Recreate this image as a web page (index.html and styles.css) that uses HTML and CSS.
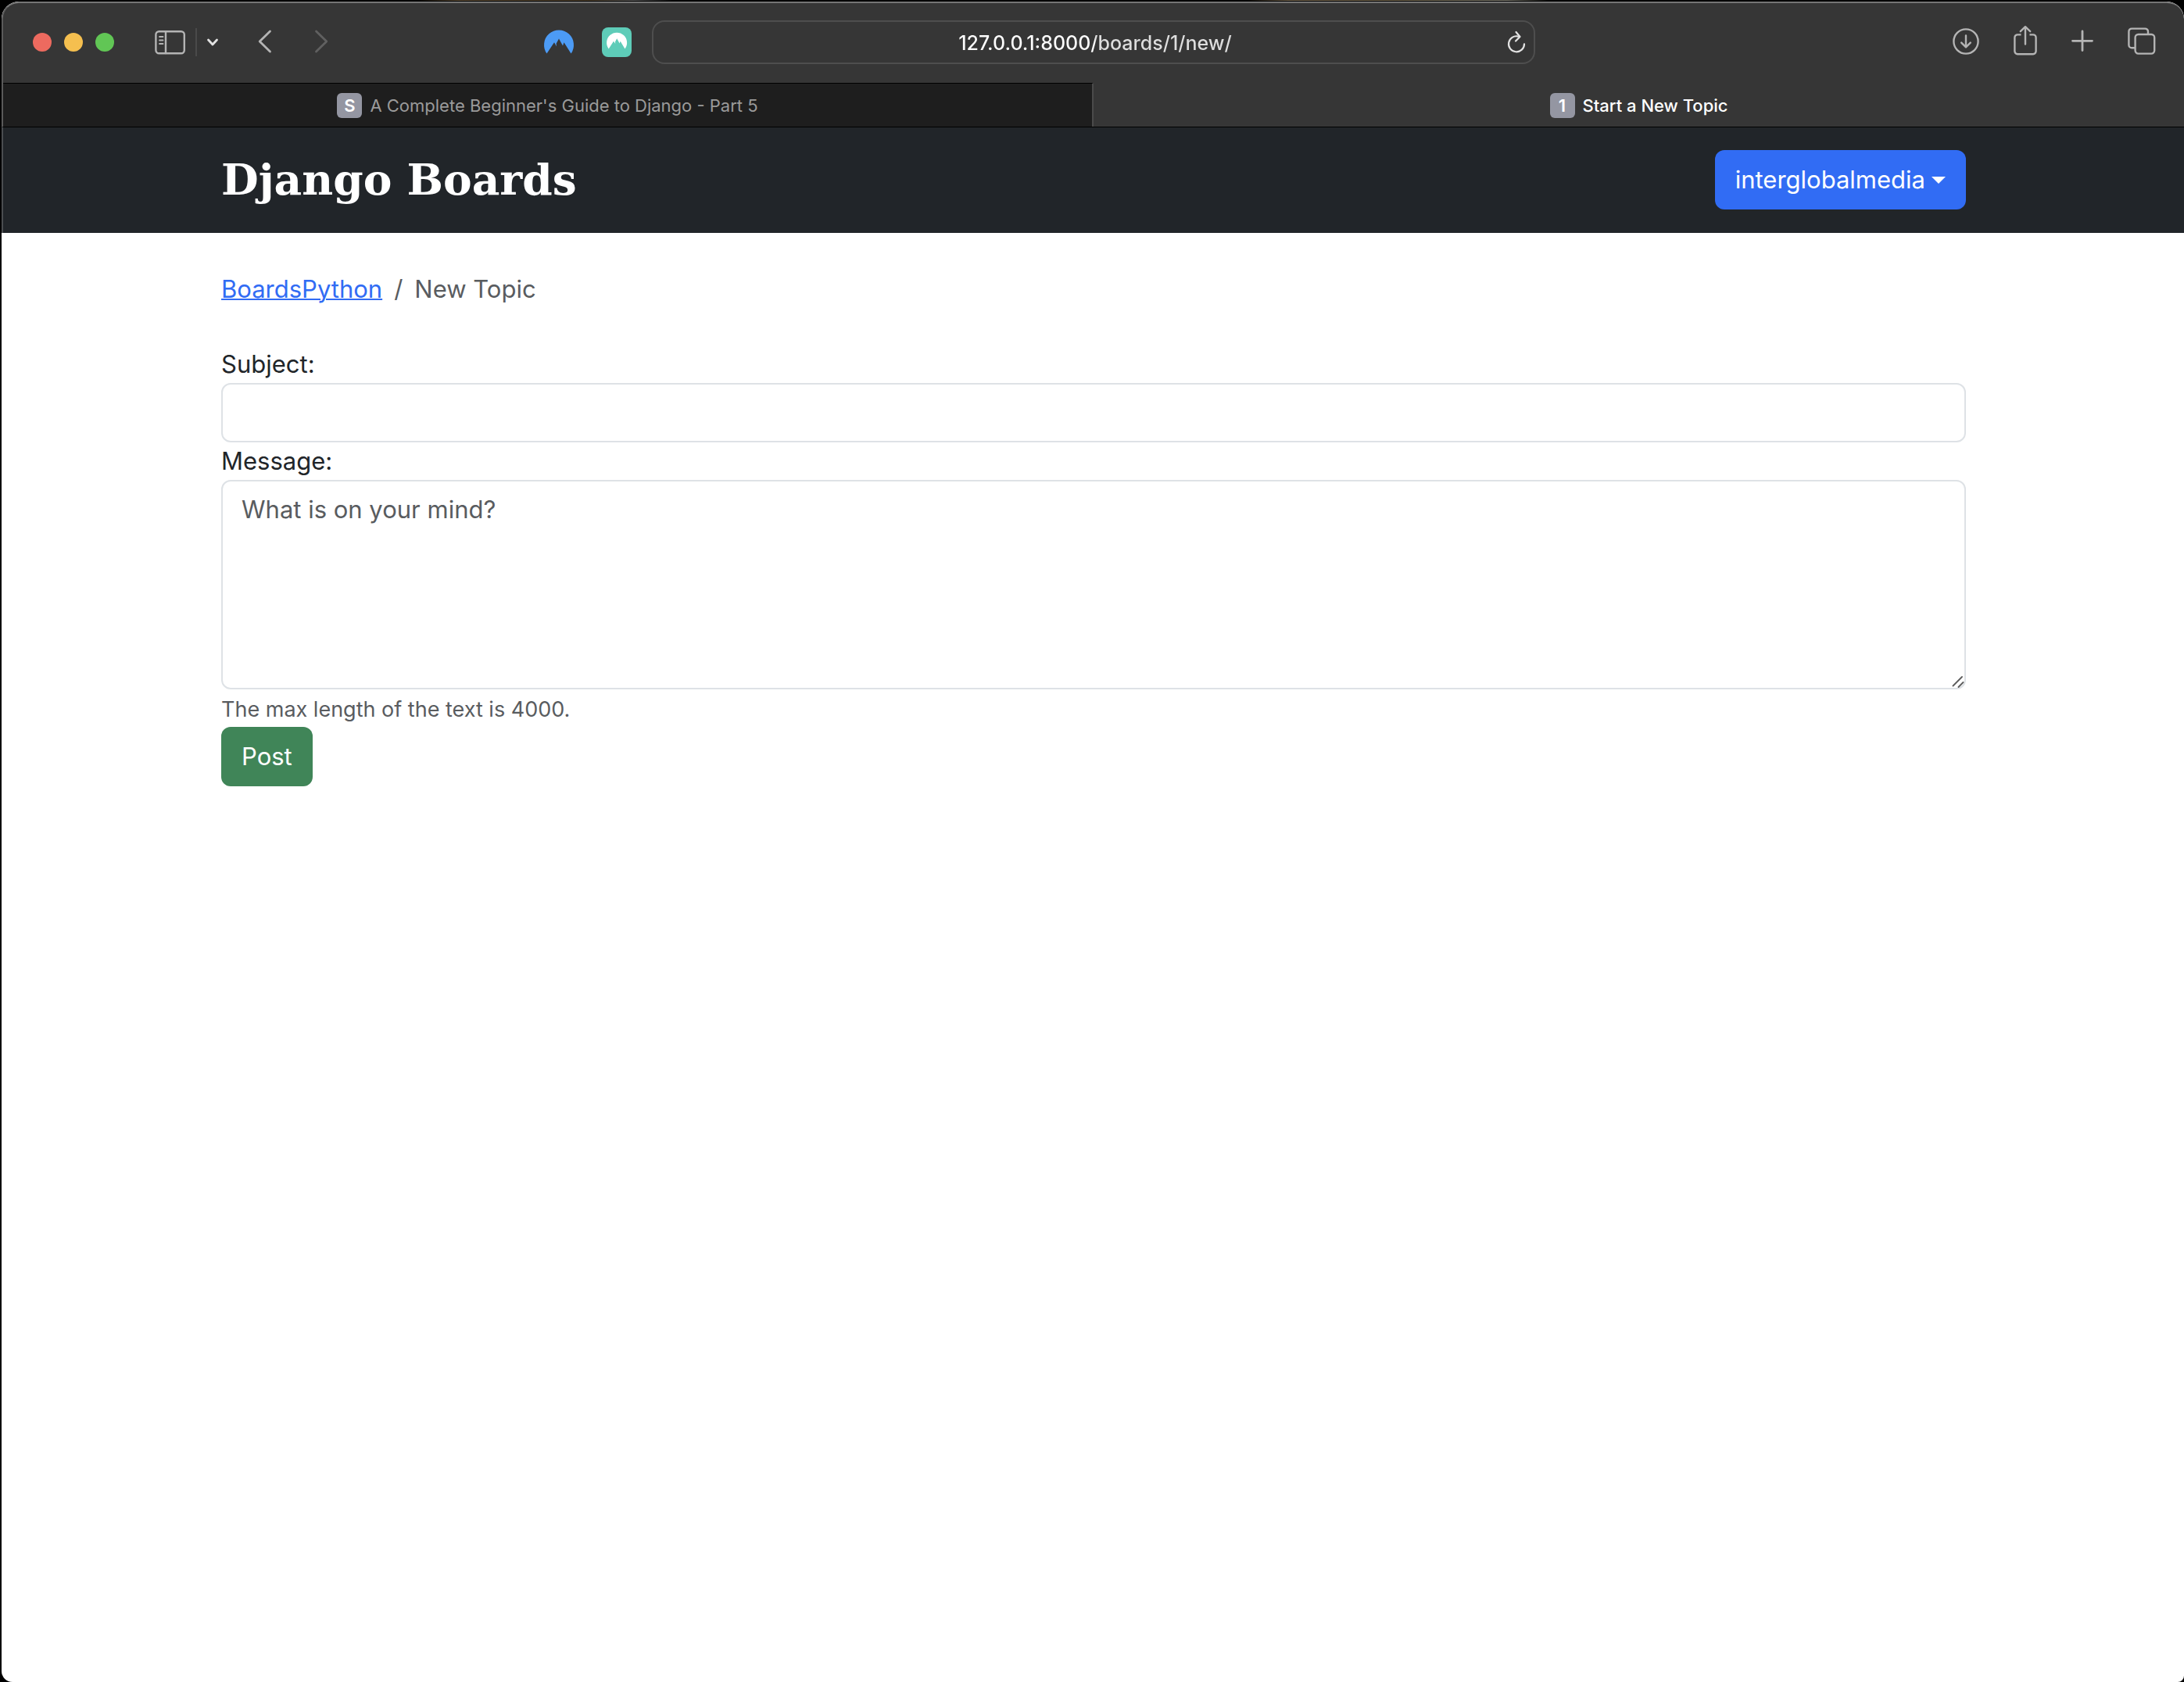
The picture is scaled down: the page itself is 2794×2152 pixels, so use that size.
FILE: index.html
```html
<!DOCTYPE html>
<html lang="en">
<head>
<meta charset="utf-8">
<title>Start a New Topic</title>
<link rel="stylesheet" href="styles.css">
</head>
<body>
<div class="window">
  <header class="chrome">
    <div class="toolbar">
      <div class="tools tools-left">
        <div class="lights">
          <button class="light light-close" aria-label="Close"></button>
          <button class="light light-min" aria-label="Minimize"></button>
          <button class="light light-max" aria-label="Zoom"></button>
        </div>
        <div class="sidebar-tools">
          <button class="icon" aria-label="Sidebar">
            <svg width="40" height="32" viewBox="0 0 40 32" fill="none" stroke="currentColor" stroke-width="2.4" stroke-linecap="round"><rect x="1.4" y="2.2" width="36.4" height="28" rx="4"/><path d="M14 2.5v27.500"/><path d="M6 9h4.500M6 13.500h4.500M6 18h4.500" stroke-width="1.800"/></svg>
          </button>
          <span class="divider"></span>
          <button class="icon icon-bright" aria-label="Tab groups">
            <svg width="16" height="12" viewBox="0 0 16 12" fill="none" stroke="currentColor" stroke-width="2.800" stroke-linecap="round" stroke-linejoin="round"><path d="M2.500 3l5.500 6 5.500-6"/></svg>
          </button>
        </div>
        <button class="icon" aria-label="Back">
          <svg width="18" height="32" viewBox="0 0 18 32" fill="none" stroke="currentColor" stroke-width="2.800" stroke-linecap="round" stroke-linejoin="round"><path d="M13.500 2L.2 15l13.300 13"/></svg>
        </button>
        <button class="icon icon-dim" aria-label="Forward">
          <svg width="18" height="32" viewBox="0 0 18 32" fill="none" stroke="currentColor" stroke-width="2.800" stroke-linecap="round" stroke-linejoin="round"><path d="M2.500 2l13.300 13L2.500 28"/></svg>
        </button>
        <div class="extensions">
          <button class="icon" aria-label="VPN">
            <svg width="38" height="30" viewBox="0 0 38 30"><path fill="#4c9bf5" d="M3.500 29.500A19 19 0 1 1 34.500 29.500L25.500 15.200 24 19.500 19 10.500 15.600 16.800 16 20.500 13 15.200Z"/></svg>
          </button>
          <button class="icon" aria-label="Password manager">
            <svg width="38" height="38" viewBox="0 0 38 38"><rect width="38" height="38" rx="8" fill="#5eccb8"/><path fill="#fff" d="M8.700 27.500A13 13 0 1 1 29.500 27.500L23.600 17.800 22.600 20.600 19.200 14.300 17 18.500 17.200 21 15 17.800Z"/></svg>
          </button>
        </div>
      </div>
      <div class="address">
        <input class="address-input" type="text" aria-label="Address" value="127.0.0.1:8000/boards/1/new/">
        <button class="icon icon-bright reload" aria-label="Reload">
          <svg width="24" height="30" viewBox="0 0 24 30" fill="none" stroke="currentColor" stroke-width="2.200" stroke-linecap="round" stroke-linejoin="round"><path d="M14.500 7.600A10 10 0 1 0 22 17.300"/><path d="M11.500 2l5 6-5.500 5.500"/></svg>
        </button>
      </div>
      <div class="tools tools-right">
        <button class="icon" aria-label="Downloads">
          <svg width="34" height="38" viewBox="0 0 34 38" fill="none" stroke="currentColor" stroke-width="2.400" stroke-linecap="round" stroke-linejoin="round"><circle cx="17" cy="18" r="15.600"/><path d="M17 10.500v14.500M11.200 19.600l5.800 5.800 5.800-5.800"/></svg>
        </button>
        <button class="icon" aria-label="Share">
          <svg width="30" height="38" viewBox="0 0 30 38" fill="none" stroke="currentColor" stroke-width="2.400" stroke-linecap="round" stroke-linejoin="round"><path d="M9.500 9.400H5a3.600 3.600 0 0 0-3.600 3.600v17.600a3.600 3.600 0 0 0 3.600 3.600h20a3.600 3.600 0 0 0 3.600-3.600V13A3.600 3.600 0 0 0 25 9.400h-4.500" stroke-linecap="butt"/><path d="M15 21.500V-.5M8.800 5.200L15-.8l6.200 6"/></svg>
        </button>
        <button class="icon" aria-label="New tab">
          <svg width="28" height="38" viewBox="0 0 28 38" fill="none" stroke="currentColor" stroke-width="2.800" stroke-linecap="round"><path d="M14 5v24.500M1.500 17.300h25"/></svg>
        </button>
        <button class="icon" aria-label="Tab overview">
          <svg width="36" height="38" viewBox="0 0 36 38" fill="none" stroke="currentColor" stroke-width="2.400"><rect x="9.600" y="9" width="24.600" height="24.600" rx="4"/><path d="M9 26.200H5.200a3.800 3.800 0 0 1-3.800-3.800V5.400a3.800 3.800 0 0 1 3.800-3.800h17a3.800 3.800 0 0 1 3.800 3.800V8.500"/></svg>
        </button>
      </div>
    </div>
    <nav class="tabs" aria-label="Tabs">
      <a class="tab" href="#"><span class="favicon">S</span>A Complete Beginner's Guide to Django - Part 5</a>
      <a class="tab tab-active" href="#"><span class="favicon">1</span>Start a New Topic</a>
    </nav>
  </header>
  <div class="navbar">
    <div class="container navbar-row">
      <a class="brand" href="#">Django Boards</a>
      <button class="btn btn-primary">interglobalmedia<span class="caret"></span></button>
    </div>
  </div>
  <main class="page">
    <div class="container">
      <ol class="breadcrumb">
        <li><a href="#">BoardsPython</a></li>
        <li class="breadcrumb-current">New Topic</li>
      </ol>
      <form class="topic-form">
        <label for="subject">Subject:</label>
        <input class="control" id="subject" type="text">
        <label for="message">Message:</label>
        <div class="message-box">
          <textarea class="control message" id="message" placeholder="What is on your mind?"></textarea>
          <svg class="grip" width="16" height="16" viewBox="0 0 16 16" fill="none" stroke="#5c5c5c" stroke-width="1.800" stroke-linecap="round"><path d="M1.500 13.500L13 2M8.500 15L14.500 9"/></svg>
        </div>
        <small class="help">The max length of the text is 4000.</small>
        <button class="btn btn-success" type="submit">Post</button>
      </form>
    </div>
  </main>
</div>
</body>
</html>
```
FILE: styles.css
```css
* {
  box-sizing: border-box;
}

body {
  margin: 0;
  min-height: 100vh;
  padding: 2px 0 0 2px;
  display: flex;
  background: #000 linear-gradient(90deg, transparent 19%, #5a4a34 21%, #4a3c28 27%, #555 29%, transparent 31%, transparent 57%, #6e604a 59%, #6b6048 64%, #77756a 69%, transparent 71%) 0 0 / 100% 1px no-repeat;
  color: #212529;
  font-family: Inter, "Liberation Sans", sans-serif;
  font-size: 31px;
  line-height: 48px;
}

button,
input,
textarea {
  font: inherit;
}

.window {
  flex: 1;
  overflow: hidden;
  background: #fff;
  border-radius: 22px 22px 8px 14px;
}

/* Browser chrome */
.chrome {
  background: #363636;
  border-top: 2px solid #757575;
  border-left: 2px solid #5a5a5a;
  border-bottom: 1px solid #000;
  border-radius: 22px 22px 0 0;
}

.toolbar {
  display: grid;
  grid-template-columns: 1fr 1130px 1fr;
  align-items: center;
  height: 102px;
  padding-bottom: 2px;
}

.tools {
  display: flex;
  align-items: center;
}

.tools-left {
  gap: 52px;
  padding: 0 26px 0 38px;
}

.tools-right {
  justify-content: flex-end;
  gap: 44px;
  padding-right: 36px;
}

.lights {
  display: flex;
  gap: 16px;
}

.light {
  width: 24px;
  height: 24px;
  padding: 0;
  border: 0;
  border-radius: 50%;
}

.light-close { background: #ed6a5f; }
.light-min { background: #f5bf4f; }
.light-max { background: #61c655; }

.sidebar-tools {
  display: flex;
  align-items: center;
  gap: 12px;
}

.divider {
  width: 2px;
  height: 36px;
  background: #4a4a4a;
}

.icon {
  display: block;
  flex: none;
  padding: 0;
  border: 0;
  background: none;
  color: #b4b4b4;
}

.icon svg {
  display: block;
  overflow: visible;
}

.icon-bright { color: #e2e2e2; }
.icon-dim { color: #606060; }

.extensions {
  display: flex;
  align-items: center;
  gap: 36px;
  margin-left: auto;
}

.address {
  display: flex;
  align-items: center;
  height: 56px;
  padding: 0 10px 0 38px;
  border: 2px solid #4e4e4e;
  border-radius: 16px;
}

.address-input {
  flex: 1;
  min-width: 0;
  padding: 2px 0 0;
  border: 0;
  background: linear-gradient(90deg, #fff 50%, #dedede 50%);
  -webkit-background-clip: text;
  background-clip: text;
  color: transparent;
  font-size: 25px;
  font-weight: 500;
  line-height: 40px;
  text-align: center;
}

.tabs {
  display: grid;
  grid-template-columns: 1fr 1fr;
}

.tab {
  display: flex;
  align-items: center;
  justify-content: center;
  gap: 10px;
  height: 56px;
  border-top: 1px solid #000;
  border-right: 2px solid #4a4a4a;
  background: #1e1e1e;
  color: #9a9a9a;
  font-size: 22px;
  line-height: 32px;
  text-decoration: none;
}

.tab-active {
  border-right: 0;
  border-color: transparent;
  background: none;
  color: #fff;
  font-weight: 500;
}

.favicon {
  width: 32px;
  height: 32px;
  border-radius: 6px;
  background: #9496a2;
  color: #fff;
  font-weight: 600;
  text-align: center;
}

/* Page */
.container {
  max-width: 2232px;
  margin: 0 auto;
}

.navbar {
  padding: 29px 0 30px;
  border-left: 2px solid #4a4d50;
  background: #212529;
}

.navbar-row {
  display: flex;
  align-items: center;
  justify-content: space-between;
}

.brand {
  color: #fff;
  font-family: "DejaVu Serif", serif;
  font-size: 55px;
  font-weight: 700;
  text-decoration: none;
}

.btn {
  display: inline-flex;
  align-items: center;
  padding: 14px 26px;
  border: 0;
  border-radius: 12px;
  color: #fff;
}

.btn-primary { background: #316cf4; }

.btn-success {
  align-self: flex-start;
  background: #408558;
}

.caret {
  margin-left: 8px;
  border: 9px solid transparent;
  border-top-color: #fff;
  border-bottom: 0;
}

.page {
  padding-left: 2px;
}

.breadcrumb {
  display: flex;
  margin: 48px 0;
  padding: 0;
  list-style: none;
}

.breadcrumb a {
  color: #316cf4;
  text-decoration-thickness: 2px;
}

.breadcrumb-current { color: #595c5f; }

.breadcrumb-current::before {
  content: "/";
  padding: 0 15px;
}

.topic-form {
  display: flex;
  flex-direction: column;
}

.control {
  display: block;
  width: 100%;
  height: 76px;
  padding: 12px 24px;
  border: 2px solid #dee2e6;
  border-radius: 12px;
  background: #fff;
  color: #212529;
}

.control::placeholder {
  color: #595c5f;
  opacity: 1;
}

.message-box {
  position: relative;
}

.message {
  height: 268px;
  resize: none;
}

.grip {
  position: absolute;
  right: 2px;
  bottom: 2px;
}

.help {
  padding-top: 4px;
  color: #595c5f;
  font-size: 27px;
  line-height: 44px;
}
```
